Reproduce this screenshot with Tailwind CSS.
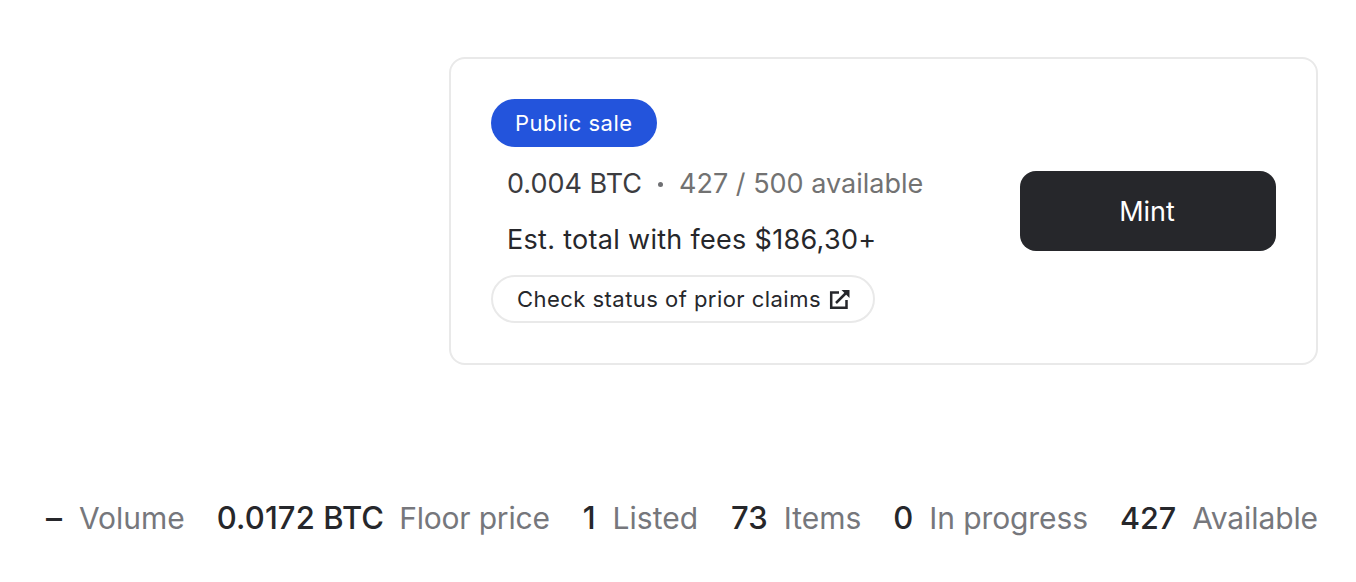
<!DOCTYPE html>
<html lang="en">
<head>
<meta charset="utf-8">
<script src="https://cdn.jsdelivr.net/npm/@tailwindcss/browser@4"></script>
<title>Mint</title>
</head>
<body class="bg-white">
<div class="w-[1356px] h-[582px] overflow-hidden pt-[57px] pr-[38px] font-['Inter',sans-serif] text-[#26272b] flex flex-col items-end">
  <section class="w-[869px] h-[308px] border-2 border-[#e9e9e9] rounded-2xl pl-[40px] pr-[40px] pt-[40px] flex items-center justify-between">
    <div class="flex flex-col items-start self-start">
      <span class="h-12 px-6 rounded-full bg-[#2354dc] text-white text-[22px] tracking-[0.5px] leading-[48px]">Public sale</span>
      <div class="mt-[19px] pl-4 flex items-center text-[27px] leading-9 text-[#3c3c3f]">
        <span>0.004 BTC</span>
        <span class="mx-4 w-[5px] h-[5px] rounded-full bg-[#6f7073]"></span>
        <span class="text-[#727272]">427 / 500 available</span>
      </div>
      <div class="mt-5 pl-4 text-[27px] tracking-[0.3px] leading-9 text-[#26272b]">Est. total with fees $186,30+</div>
      <a class="mt-[17px] h-12 px-6 rounded-full border-2 border-[#e9e9e9] flex items-center gap-2 text-[22px] tracking-[0.46px] text-[#26272b]">
        Check status of prior claims
        <svg class="w-5 h-5 overflow-visible" viewBox="0 0 20 20" fill="none" stroke="#26272b" stroke-width="2.5">
          <path d="M10 3.5H2.2V18.8H17.5V11"/>
          <path d="M7 14 17 4"/>
          <path d="M12.5 1H20.5V9z" stroke="none" fill="#26272b"/>
        </svg>
      </a>
    </div>
    <button class="w-64 h-20 mb-[40px] pt-[2px] pr-[2px] rounded-2xl bg-[#26272b] text-white text-[27px]">Mint</button>
  </section>
  <div class="mt-[133px] flex items-center text-[30px] leading-10 whitespace-nowrap">
    <div class="flex gap-[17px] mr-8"><span class="font-medium text-[32px]">–</span><span class="text-[#76777c]">Volume</span></div>
    <div class="flex gap-[15px] mr-[33px]"><span class="font-medium text-[31px] tracking-[0.1px]">0.0172 BTC</span><span class="text-[#76777c] tracking-[-0.2px]">Floor price</span></div>
    <div class="flex gap-[17px] mr-[33px]"><span class="font-medium text-[31px]">1</span><span class="text-[#76777c]">Listed</span></div>
    <div class="flex gap-4 mr-8"><span class="font-medium text-[31px]">73</span><span class="text-[#76777c]">Items</span></div>
    <div class="flex gap-4 mr-8"><span class="font-medium text-[31px]">0</span><span class="text-[#76777c] tracking-[-0.1px]">In progress</span></div>
    <div class="flex gap-4"><span class="font-medium text-[30.5px]">427</span><span class="text-[#76777c] tracking-[-0.1px]">Available</span></div>
  </div>
</div>
</body>
</html>
